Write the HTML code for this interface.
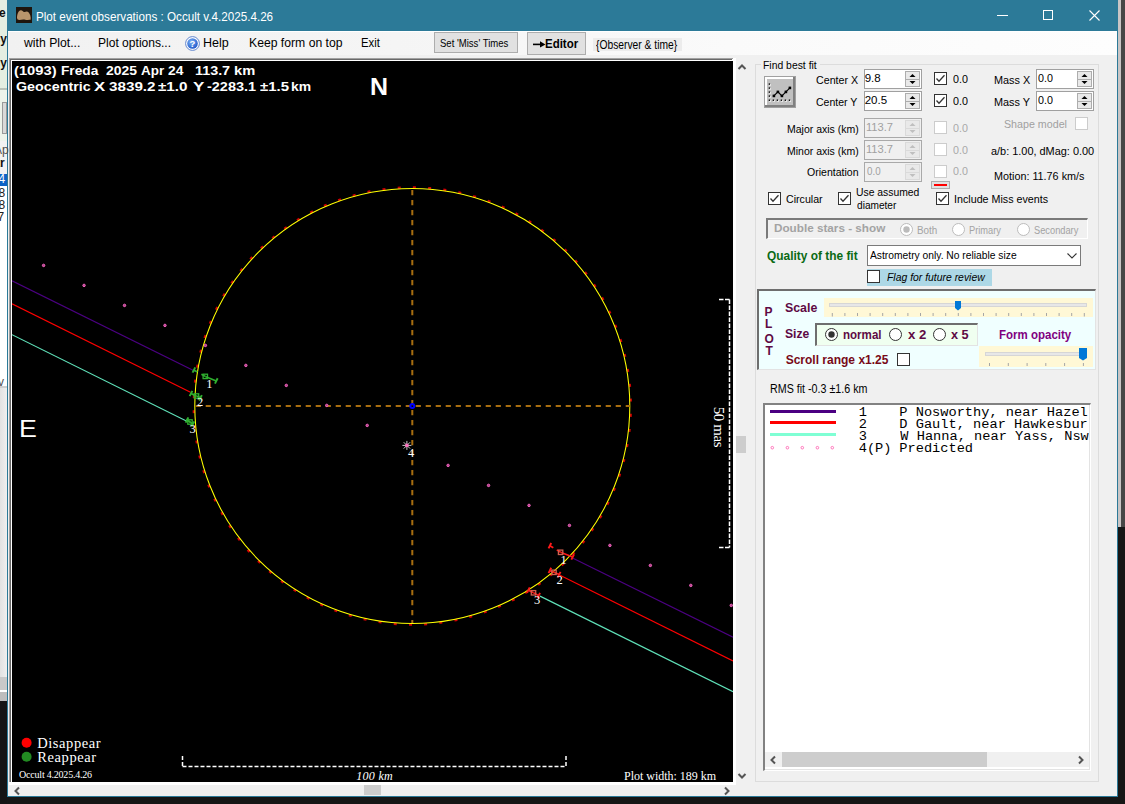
<!DOCTYPE html><html><head><meta charset="utf-8"><style>html,body{margin:0;padding:0;width:1125px;height:804px;overflow:hidden;background:#161616}body>div,body>svg{position:absolute}body{font-family:"Liberation Sans",sans-serif}</style></head><body><div style="left:0px;top:0px;width:1125px;height:804px;background:#161616"></div>
<div style="left:1118px;top:0px;width:3px;height:527px;background:#c9c5c5"></div>
<div style="left:1121px;top:0px;width:4px;height:527px;background:#474747"></div>
<div style="left:0px;top:0px;width:7px;height:88px;background:#e4eee2"></div>
<div style="left:0px;top:88px;width:7px;height:2px;background:#b9c2b9"></div>
<div style="left:0px;top:90px;width:7px;height:51px;background:#edf3eb"></div>
<div style="left:2px;top:102px;width:5px;height:32px;background:#d9d9d9;border:1px solid #9a9a9a;box-sizing:border-box"></div>
<div style="left:0px;top:141px;width:7px;height:33px;background:#f2f2f2"></div>
<div style="left:0px;top:174px;width:7px;height:12px;background:#0b63c6"></div>
<div style="left:0px;top:186px;width:7px;height:200px;background:#ffffff"></div>
<div style="left:0px;top:386px;width:7px;height:2px;background:#cfcfcf"></div>
<div style="left:0px;top:388px;width:7px;height:289px;background:linear-gradient(90deg,#e2e2e2,#efefef)"></div>
<div style="left:0px;top:677px;width:7px;height:13px;background:#c9c9c9"></div>
<div style="left:0px;top:690px;width:7px;height:2px;background:#ffffff"></div>
<div style="left:0px;top:692px;width:7px;height:9px;background:#bdbdbd"></div>
<div style="left:0px;top:701px;width:7px;height:103px;background:#151515"></div>
<div style="left:7px;top:0px;width:1111px;height:797px;background:#2c7a98"></div>
<div style="left:8px;top:31px;width:1109px;height:765px;background:#f0f0f0"></div>
<div style="left:8px;top:31px;width:1109px;height:24px;background:linear-gradient(90deg,#f1f1f1 0%,#f5f5f5 35%,#fafafa 65%,#fdfdfd 100%)"></div>
<div style="left:8px;top:31px;width:1109px;height:1px;background:#ffffff"></div>
<svg style="left:16px;top:7px" width="16" height="16"><rect width="16" height="16" fill="#1e150d"/><path d="M1 11 C1 7.5 2.5 3.5 4.8 3.3 C6.5 3.2 7 5.3 8.5 5 C10 4.7 11 3.8 12.5 5.2 C14 6.8 15.2 10 14.6 12.8 C12.5 12.2 10.5 13.6 8.3 12.6 C6.2 12 4 13.6 1.6 12.6 Z" fill="#b8956c"/></svg>
<div style="left:997px;top:15px;width:11px;height:1px;background:#fff"></div>
<div style="left:1043px;top:10px;width:10px;height:10px;border:1px solid #fff;box-sizing:border-box"></div>
<svg style="left:1088px;top:9px" width="13" height="13"><path d="M1.5 1.5 L11.5 11.5 M11.5 1.5 L1.5 11.5" stroke="#fff" stroke-width="1.1"/></svg>
<svg style="left:185px;top:36px" width="15" height="15"><defs><radialGradient id="hg" cx="0.4" cy="0.35" r="0.7"><stop offset="0" stop-color="#7fb4f5"/><stop offset="1" stop-color="#1c56c9"/></radialGradient></defs><circle cx="7.5" cy="7.5" r="6.9" fill="#ffffff" stroke="#4f78c8" stroke-width="0.9"/><circle cx="7.5" cy="7.5" r="5.3" fill="url(#hg)"/><text x="7.5" y="11" text-anchor="middle" font-family="Liberation Sans" font-weight="bold" font-size="9.5" fill="#fff">?</text></svg>
<div style="left:434px;top:32px;width:84px;height:21px;background:#e1e1e1;border:1px solid #adadad;box-sizing:border-box"></div>
<div style="left:527px;top:32px;width:59px;height:23px;background:#e1e1e1;border:1px solid #adadad;box-sizing:border-box"></div>
<svg style="left:532px;top:40px" width="16" height="9"><path d="M1 4.4 L11 4.4" stroke="#000" stroke-width="1.6"/><path d="M8 1.2 L13.5 4.4 L8 7.6 Z" fill="#000"/></svg>
<div style="left:593px;top:38px;width:89px;height:13px;background:#ececec"></div>
<div style="left:9px;top:58px;width:727px;height:727px;background:#ffffff"></div>
<div style="left:9px;top:58px;width:724px;height:1px;background:#a0a0a0"></div>
<div style="left:9px;top:59px;width:723px;height:1px;background:#696969"></div>
<div style="left:9px;top:58px;width:1px;height:724px;background:#a0a0a0"></div>
<div style="left:10px;top:59px;width:1px;height:723px;background:#696969"></div>
<div style="left:12px;top:61px;width:721px;height:721px;background:#000"></div>
<svg style="left:12px;top:61px" width="721" height="721" viewBox="12 61 721 721"><line x1="12.00" y1="280.80" x2="196.00" y2="371.77" stroke="#4b0082" stroke-width="1.15" /><line x1="573.00" y1="558.16" x2="733.00" y2="637.26" stroke="#4b0082" stroke-width="1.15" /><line x1="12.00" y1="303.80" x2="190.50" y2="392.23" stroke="#ff0000" stroke-width="1.15" /><line x1="560.00" y1="575.28" x2="733.00" y2="660.98" stroke="#ff0000" stroke-width="1.15" /><line x1="12.00" y1="334.70" x2="186.40" y2="421.04" stroke="#5fe0b8" stroke-width="1.15" /><line x1="540.00" y1="596.11" x2="733.00" y2="691.66" stroke="#5fe0b8" stroke-width="1.15" /><circle cx="412.3" cy="406.0" r="218.60" fill="none" stroke="#d00000" stroke-width="2.2" stroke-dasharray="3 12.261" transform="rotate(-1.943 412.3 406.0)"/><circle cx="412.3" cy="406.0" r="217.5" fill="none" stroke="#ffff00" stroke-width="1.05"/><line x1="195.70" y1="406.00" x2="630.00" y2="406.00" stroke="#a86e10" stroke-width="2" stroke-dasharray="5.2 4.8" /><line x1="412.30" y1="190.00" x2="412.30" y2="623.00" stroke="#a86e10" stroke-width="2" stroke-dasharray="5.2 4.8" /><circle cx="412.3" cy="406.0" r="2.0" fill="none" stroke="#0000ff" stroke-width="2"/><circle cx="43.60" cy="265.40" r="1.25" fill="#b04888" stroke="#ff66c8" stroke-width="0.9"/><circle cx="84.05" cy="285.40" r="1.25" fill="#b04888" stroke="#ff66c8" stroke-width="0.9"/><circle cx="124.50" cy="305.40" r="1.25" fill="#b04888" stroke="#ff66c8" stroke-width="0.9"/><circle cx="164.95" cy="325.40" r="1.25" fill="#b04888" stroke="#ff66c8" stroke-width="0.9"/><circle cx="205.40" cy="345.40" r="1.25" fill="#b04888" stroke="#ff66c8" stroke-width="0.9"/><circle cx="245.85" cy="365.40" r="1.25" fill="#b04888" stroke="#ff66c8" stroke-width="0.9"/><circle cx="286.30" cy="385.40" r="1.25" fill="#b04888" stroke="#ff66c8" stroke-width="0.9"/><circle cx="326.75" cy="405.40" r="1.25" fill="#b04888" stroke="#ff66c8" stroke-width="0.9"/><circle cx="367.20" cy="425.40" r="1.25" fill="#b04888" stroke="#ff66c8" stroke-width="0.9"/><circle cx="448.10" cy="465.40" r="1.25" fill="#b04888" stroke="#ff66c8" stroke-width="0.9"/><circle cx="488.55" cy="485.40" r="1.25" fill="#b04888" stroke="#ff66c8" stroke-width="0.9"/><circle cx="529.00" cy="505.40" r="1.25" fill="#b04888" stroke="#ff66c8" stroke-width="0.9"/><circle cx="569.45" cy="525.40" r="1.25" fill="#b04888" stroke="#ff66c8" stroke-width="0.9"/><circle cx="609.90" cy="545.40" r="1.25" fill="#b04888" stroke="#ff66c8" stroke-width="0.9"/><circle cx="650.35" cy="565.40" r="1.25" fill="#b04888" stroke="#ff66c8" stroke-width="0.9"/><circle cx="690.80" cy="585.40" r="1.25" fill="#b04888" stroke="#ff66c8" stroke-width="0.9"/><circle cx="731.25" cy="605.40" r="1.25" fill="#b04888" stroke="#ff66c8" stroke-width="0.9"/><line x1="402.40" y1="445.40" x2="411.40" y2="445.40" stroke="#c8c8c8" stroke-width="1" /><line x1="403.72" y1="442.22" x2="410.08" y2="448.58" stroke="#c8c8c8" stroke-width="1" /><line x1="406.90" y1="440.90" x2="406.90" y2="449.90" stroke="#c8c8c8" stroke-width="1" /><line x1="410.08" y1="442.22" x2="403.72" y2="448.58" stroke="#c8c8c8" stroke-width="1" /><circle cx="406.9" cy="445.4" r="1.8" fill="#ff70c0"/><line x1="192.57" y1="372.69" x2="195.23" y2="367.31" stroke="#2fb02f" stroke-width="1.9" /><line x1="214.97" y1="383.59" x2="217.63" y2="378.21" stroke="#2fb02f" stroke-width="1.9" /><line x1="193.90" y1="370.00" x2="197.39" y2="371.96" stroke="#2fb02f" stroke-width="1.6" /><line x1="201.38" y1="374.20" x2="205.30" y2="376.40" stroke="#2fb02f" stroke-width="1.6" /><line x1="205.30" y1="376.40" x2="216.30" y2="380.90" stroke="#2fb02f" stroke-width="1.6" /><rect x="203.1" y="374.2" width="4.4" height="4.4" fill="none" stroke="#2fb02f" stroke-width="1.3"/><line x1="189.67" y1="396.19" x2="192.33" y2="390.81" stroke="#2fb02f" stroke-width="1.9" /><line x1="199.17" y1="400.49" x2="201.83" y2="395.11" stroke="#2fb02f" stroke-width="1.9" /><line x1="191.00" y1="393.50" x2="194.64" y2="395.16" stroke="#2fb02f" stroke-width="1.6" /><line x1="192.40" y1="394.14" x2="196.50" y2="396.00" stroke="#2fb02f" stroke-width="1.6" /><line x1="196.50" y1="396.00" x2="200.50" y2="397.80" stroke="#2fb02f" stroke-width="1.6" /><rect x="194.3" y="393.8" width="4.4" height="4.4" fill="none" stroke="#2fb02f" stroke-width="1.3"/><line x1="185.67" y1="422.69" x2="188.33" y2="417.31" stroke="#2fb02f" stroke-width="1.9" /><line x1="191.67" y1="426.69" x2="194.33" y2="421.31" stroke="#2fb02f" stroke-width="1.9" /><line x1="187.00" y1="420.00" x2="190.33" y2="422.22" stroke="#2fb02f" stroke-width="1.6" /><line x1="186.26" y1="419.50" x2="190.00" y2="422.00" stroke="#2fb02f" stroke-width="1.6" /><line x1="190.00" y1="422.00" x2="193.00" y2="424.00" stroke="#2fb02f" stroke-width="1.6" /><rect x="187.8" y="419.8" width="4.4" height="4.4" fill="none" stroke="#2fb02f" stroke-width="1.3"/><line x1="548.57" y1="548.39" x2="551.23" y2="543.01" stroke="#ff1a1a" stroke-width="1.9" /><line x1="571.37" y1="559.59" x2="574.03" y2="554.21" stroke="#ff1a1a" stroke-width="1.9" /><line x1="549.90" y1="545.70" x2="553.30" y2="547.80" stroke="#ff1a1a" stroke-width="1.6" /><line x1="556.77" y1="549.94" x2="560.60" y2="552.30" stroke="#ff1a1a" stroke-width="1.6" /><line x1="560.60" y1="552.30" x2="572.70" y2="556.90" stroke="#ff1a1a" stroke-width="1.6" /><rect x="558.4" y="550.1" width="4.4" height="4.4" fill="none" stroke="#d06050" stroke-width="1.3"/><line x1="548.57" y1="573.09" x2="551.23" y2="567.71" stroke="#ff1a1a" stroke-width="1.9" /><line x1="557.87" y1="577.29" x2="560.53" y2="571.91" stroke="#ff1a1a" stroke-width="1.9" /><line x1="549.90" y1="570.40" x2="553.53" y2="572.08" stroke="#ff1a1a" stroke-width="1.6" /><line x1="549.92" y1="570.41" x2="554.00" y2="572.30" stroke="#ff1a1a" stroke-width="1.6" /><line x1="554.00" y1="572.30" x2="559.20" y2="574.60" stroke="#ff1a1a" stroke-width="1.6" /><rect x="551.8" y="570.1" width="4.4" height="4.4" fill="none" stroke="#d06050" stroke-width="1.3"/><line x1="527.07" y1="592.69" x2="529.73" y2="587.31" stroke="#ff1a1a" stroke-width="1.9" /><line x1="537.37" y1="598.29" x2="540.03" y2="592.91" stroke="#ff1a1a" stroke-width="1.9" /><line x1="528.40" y1="590.00" x2="531.91" y2="591.93" stroke="#ff1a1a" stroke-width="1.6" /><line x1="529.56" y1="590.63" x2="533.50" y2="592.80" stroke="#ff1a1a" stroke-width="1.6" /><line x1="533.50" y1="592.80" x2="538.70" y2="595.60" stroke="#ff1a1a" stroke-width="1.6" /><rect x="531.3" y="590.6" width="4.4" height="4.4" fill="none" stroke="#d06050" stroke-width="1.3"/><line x1="719.00" y1="299.50" x2="729.50" y2="299.50" stroke="#fff" stroke-width="1.5" stroke-dasharray="4.5 1.5" /><line x1="729.50" y1="299.50" x2="729.50" y2="547.50" stroke="#fff" stroke-width="1.5" stroke-dasharray="4.5 1.5" /><line x1="719.00" y1="547.50" x2="729.50" y2="547.50" stroke="#fff" stroke-width="1.5" stroke-dasharray="4.5 1.5" /><line x1="182.50" y1="766.50" x2="566.00" y2="766.50" stroke="#fff" stroke-width="1.5" stroke-dasharray="4 2" /><line x1="182.50" y1="756.00" x2="182.50" y2="766.50" stroke="#fff" stroke-width="1.5" stroke-dasharray="4 2" /><line x1="566.00" y1="756.00" x2="566.00" y2="766.50" stroke="#fff" stroke-width="1.5" stroke-dasharray="4 2" /><circle cx="26.6" cy="742.7" r="5" fill="#ff0000"/><circle cx="26.6" cy="756.7" r="5" fill="#228b22"/></svg>
<div style="left:688.6px;top:419.0px;width:60px;height:16px;transform:rotate(90deg);transform-origin:30px 8px;font:15px/16px 'Liberation Serif',serif;letter-spacing:-0.4px;color:#fff;text-align:center;white-space:pre">50 mas</div>
<svg style="left:737px;top:62px" width="10" height="10"><path d="M1.5 7 L5 3.5 L8.5 7" fill="none" stroke="#555555" stroke-width="2"/></svg>
<svg style="left:737px;top:771px" width="10" height="10"><path d="M1.5 3 L5 6.5 L8.5 3" fill="none" stroke="#555555" stroke-width="2"/></svg>
<div style="left:736px;top:436px;width:10px;height:17px;background:#cdcdcd"></div>
<svg style="left:12px;top:786px" width="10" height="10"><path d="M7 1.5 L3.5 5 L7 8.5" fill="none" stroke="#555555" stroke-width="2"/></svg>
<svg style="left:722px;top:786px" width="10" height="10"><path d="M3 1.5 L6.5 5 L3 8.5" fill="none" stroke="#555555" stroke-width="2"/></svg>
<div style="left:364px;top:785px;width:17px;height:10px;background:#cdcdcd"></div>
<div style="left:755px;top:64px;width:344px;height:718px;border:1px solid #dcdcdc;box-sizing:border-box"></div>
<div style="left:761px;top:60px;width:59px;height:8px;background:#f0f0f0"></div>
<div style="left:764px;top:76px;width:32px;height:32px;background:#a0a0a0"></div>
<div style="left:765px;top:77px;width:30px;height:30px;background:#808080"></div>
<div style="left:765px;top:77px;width:28px;height:28px;background:#ffffff"></div>
<div style="left:767px;top:79px;width:26px;height:26px;background:#c0c0c0"></div>
<svg style="left:764px;top:76px" width="32" height="32"><rect x="5.3" y="8.0" width="1.6" height="1.6" fill="#fff"/><rect x="4.7" y="7.4" width="1.4" height="1.4" fill="#000"/><rect x="5.3" y="12.0" width="1.6" height="1.6" fill="#fff"/><rect x="4.7" y="11.4" width="1.4" height="1.4" fill="#000"/><rect x="5.3" y="16.0" width="1.6" height="1.6" fill="#fff"/><rect x="4.7" y="15.4" width="1.4" height="1.4" fill="#000"/><rect x="5.3" y="20.0" width="1.6" height="1.6" fill="#fff"/><rect x="4.7" y="19.4" width="1.4" height="1.4" fill="#000"/><rect x="5.3" y="24.1" width="1.6" height="1.6" fill="#fff"/><rect x="4.7" y="23.5" width="1.4" height="1.4" fill="#000"/><rect x="9.3" y="24.1" width="1.6" height="1.6" fill="#fff"/><rect x="8.7" y="23.5" width="1.4" height="1.4" fill="#000"/><rect x="13.3" y="24.1" width="1.6" height="1.6" fill="#fff"/><rect x="12.7" y="23.5" width="1.4" height="1.4" fill="#000"/><rect x="17.3" y="24.1" width="1.6" height="1.6" fill="#fff"/><rect x="16.7" y="23.5" width="1.4" height="1.4" fill="#000"/><rect x="21.3" y="24.1" width="1.6" height="1.6" fill="#fff"/><rect x="20.7" y="23.5" width="1.4" height="1.4" fill="#000"/><rect x="25.4" y="24.1" width="1.6" height="1.6" fill="#fff"/><rect x="24.8" y="23.5" width="1.4" height="1.4" fill="#000"/><polyline points="9.9,19.9 13.9,15.9 17.9,19.9 21.9,15.9 25.9,11.9" fill="none" stroke="#000" stroke-width="1.1"/><rect x="8.6" y="18.599999999999998" width="2.6" height="2.6" fill="#000"/><rect x="12.6" y="14.6" width="2.6" height="2.6" fill="#000"/><rect x="16.599999999999998" y="18.599999999999998" width="2.6" height="2.6" fill="#000"/><rect x="20.599999999999998" y="14.6" width="2.6" height="2.6" fill="#000"/><rect x="24.599999999999998" y="10.6" width="2.6" height="2.6" fill="#000"/></svg>
<div style="left:864px;top:69px;width:58px;height:20px;border:1px solid #a0a0a0;background:#ffffff;box-sizing:border-box"></div>
<div style="left:905px;top:71px;width:15px;height:16px;background:#e9e9e9;border:1px solid #adadad;box-sizing:border-box"></div>
<div style="left:906px;top:79px;width:13px;height:1px;background:#adadad"></div>
<svg style="left:905px;top:71px" width="15" height="16"><path d="M4.5 6 L7.5 3 L10.5 6 Z" fill="#000"/><path d="M4.5 10 L7.5 13 L10.5 10 Z" fill="#000"/></svg>
<div style="left:864px;top:91px;width:58px;height:20px;border:1px solid #a0a0a0;background:#ffffff;box-sizing:border-box"></div>
<div style="left:905px;top:93px;width:15px;height:16px;background:#e9e9e9;border:1px solid #adadad;box-sizing:border-box"></div>
<div style="left:906px;top:101px;width:13px;height:1px;background:#adadad"></div>
<svg style="left:905px;top:93px" width="15" height="16"><path d="M4.5 6 L7.5 3 L10.5 6 Z" fill="#000"/><path d="M4.5 10 L7.5 13 L10.5 10 Z" fill="#000"/></svg>
<div style="left:934px;top:72px;width:13px;height:13px;border:1px solid #333333;background:#fff;box-sizing:border-box"></div>
<svg style="left:934px;top:72px" width="13" height="13"><path d="M2.5 6.5 L5 9.2 L10.5 3.2" fill="none" stroke="#333" stroke-width="1.3"/></svg>
<div style="left:934px;top:94px;width:13px;height:13px;border:1px solid #333333;background:#fff;box-sizing:border-box"></div>
<svg style="left:934px;top:94px" width="13" height="13"><path d="M2.5 6.5 L5 9.2 L10.5 3.2" fill="none" stroke="#333" stroke-width="1.3"/></svg>
<div style="left:1036px;top:69px;width:58px;height:20px;border:1px solid #a0a0a0;background:#ffffff;box-sizing:border-box"></div>
<div style="left:1077px;top:71px;width:15px;height:16px;background:#e9e9e9;border:1px solid #adadad;box-sizing:border-box"></div>
<div style="left:1078px;top:79px;width:13px;height:1px;background:#adadad"></div>
<svg style="left:1077px;top:71px" width="15" height="16"><path d="M4.5 6 L7.5 3 L10.5 6 Z" fill="#000"/><path d="M4.5 10 L7.5 13 L10.5 10 Z" fill="#000"/></svg>
<div style="left:1036px;top:91px;width:58px;height:20px;border:1px solid #a0a0a0;background:#ffffff;box-sizing:border-box"></div>
<div style="left:1077px;top:93px;width:15px;height:16px;background:#e9e9e9;border:1px solid #adadad;box-sizing:border-box"></div>
<div style="left:1078px;top:101px;width:13px;height:1px;background:#adadad"></div>
<svg style="left:1077px;top:93px" width="15" height="16"><path d="M4.5 6 L7.5 3 L10.5 6 Z" fill="#000"/><path d="M4.5 10 L7.5 13 L10.5 10 Z" fill="#000"/></svg>
<div style="left:864px;top:118px;width:58px;height:20px;border:1px solid #a9a9a9;background:#f0f0f0;box-sizing:border-box"></div>
<div style="left:905px;top:120px;width:15px;height:16px;background:#e9e9e9;border:1px solid #dadada;box-sizing:border-box"></div>
<div style="left:906px;top:128px;width:13px;height:1px;background:#dadada"></div>
<svg style="left:905px;top:120px" width="15" height="16"><path d="M4.5 6 L7.5 3 L10.5 6 Z" fill="#bfbfbf"/><path d="M4.5 10 L7.5 13 L10.5 10 Z" fill="#bfbfbf"/></svg>
<div style="left:864px;top:140px;width:58px;height:20px;border:1px solid #a9a9a9;background:#f0f0f0;box-sizing:border-box"></div>
<div style="left:905px;top:142px;width:15px;height:16px;background:#e9e9e9;border:1px solid #dadada;box-sizing:border-box"></div>
<div style="left:906px;top:150px;width:13px;height:1px;background:#dadada"></div>
<svg style="left:905px;top:142px" width="15" height="16"><path d="M4.5 6 L7.5 3 L10.5 6 Z" fill="#bfbfbf"/><path d="M4.5 10 L7.5 13 L10.5 10 Z" fill="#bfbfbf"/></svg>
<div style="left:864px;top:162px;width:58px;height:20px;border:1px solid #a9a9a9;background:#f0f0f0;box-sizing:border-box"></div>
<div style="left:905px;top:164px;width:15px;height:16px;background:#e9e9e9;border:1px solid #dadada;box-sizing:border-box"></div>
<div style="left:906px;top:172px;width:13px;height:1px;background:#dadada"></div>
<svg style="left:905px;top:164px" width="15" height="16"><path d="M4.5 6 L7.5 3 L10.5 6 Z" fill="#bfbfbf"/><path d="M4.5 10 L7.5 13 L10.5 10 Z" fill="#bfbfbf"/></svg>
<div style="left:934px;top:121px;width:13px;height:13px;border:1px solid #cccccc;background:#fff;box-sizing:border-box"></div>
<div style="left:934px;top:143px;width:13px;height:13px;border:1px solid #cccccc;background:#fff;box-sizing:border-box"></div>
<div style="left:934px;top:165px;width:13px;height:13px;border:1px solid #cccccc;background:#fff;box-sizing:border-box"></div>
<div style="left:931px;top:181px;width:19px;height:8px;background:#e1e1e1;border:1px solid #adadad;box-sizing:border-box"></div>
<div style="left:934px;top:184px;width:13px;height:2px;background:#ff0000"></div>
<div style="left:1075px;top:117px;width:13px;height:13px;border:1px solid #cccccc;background:#fff;box-sizing:border-box"></div>
<div style="left:768px;top:192px;width:13px;height:13px;border:1px solid #333333;background:#fff;box-sizing:border-box"></div>
<svg style="left:768px;top:192px" width="13" height="13"><path d="M2.5 6.5 L5 9.2 L10.5 3.2" fill="none" stroke="#333" stroke-width="1.3"/></svg>
<div style="left:838px;top:192px;width:13px;height:13px;border:1px solid #333333;background:#fff;box-sizing:border-box"></div>
<svg style="left:838px;top:192px" width="13" height="13"><path d="M2.5 6.5 L5 9.2 L10.5 3.2" fill="none" stroke="#333" stroke-width="1.3"/></svg>
<div style="left:936px;top:192px;width:13px;height:13px;border:1px solid #333333;background:#fff;box-sizing:border-box"></div>
<svg style="left:936px;top:192px" width="13" height="13"><path d="M2.5 6.5 L5 9.2 L10.5 3.2" fill="none" stroke="#333" stroke-width="1.3"/></svg>
<div style="left:766px;top:218px;width:322px;height:21px;background:#f0f0f0;border-top:2px solid #7a7a7a;border-left:2px solid #7a7a7a;border-right:1px solid #ffffff;border-bottom:1px solid #ffffff;box-sizing:border-box"></div>
<svg style="left:900px;top:223px" width="13" height="13"><circle cx="6.5" cy="6.5" r="6" fill="#fff" stroke="#bcbcbc" stroke-width="1"/><circle cx="6.5" cy="6.5" r="3.2" fill="#bcbcbc"/></svg>
<svg style="left:952px;top:223px" width="13" height="13"><circle cx="6.5" cy="6.5" r="6" fill="#fff" stroke="#bcbcbc" stroke-width="1"/></svg>
<svg style="left:1017px;top:223px" width="13" height="13"><circle cx="6.5" cy="6.5" r="6" fill="#fff" stroke="#bcbcbc" stroke-width="1"/></svg>
<div style="left:867px;top:245px;width:214px;height:21px;background:#fff;border:1px solid #7a7a7a;box-sizing:border-box"></div>
<svg style="left:1066px;top:251px" width="12" height="10"><path d="M1.5 2.5 L6 7 L10.5 2.5" fill="none" stroke="#333" stroke-width="1.1"/></svg>
<div style="left:867px;top:269px;width:125px;height:17px;background:#add8e6"></div>
<div style="left:867px;top:270px;width:13px;height:13px;border:1px solid #333333;background:#fff;box-sizing:border-box"></div>
<div style="left:757px;top:289px;width:339px;height:81px;background:#f0ffff;border-top:2px solid #6e6e6e;border-left:2px solid #6e6e6e;border-right:1px solid #e3e3e3;border-bottom:1px solid #e3e3e3;box-sizing:border-box"></div>
<div style="left:824px;top:298px;width:269px;height:19px;background:#fff8d6"></div>
<div style="left:829px;top:303px;width:258px;height:4px;background:#e7e7e7;border:1px solid #d6d6d6;box-sizing:border-box"></div>
<svg style="left:824px;top:298px" width="269" height="19"><line x1="8.3" y1="15" x2="8.3" y2="18.5" stroke="#a6a6a6" stroke-width="1"/><line x1="20.9" y1="15" x2="20.9" y2="18" stroke="#a6a6a6" stroke-width="1"/><line x1="33.5" y1="15" x2="33.5" y2="18" stroke="#a6a6a6" stroke-width="1"/><line x1="46.1" y1="15" x2="46.1" y2="18" stroke="#a6a6a6" stroke-width="1"/><line x1="58.7" y1="15" x2="58.7" y2="18" stroke="#a6a6a6" stroke-width="1"/><line x1="71.3" y1="15" x2="71.3" y2="18" stroke="#a6a6a6" stroke-width="1"/><line x1="83.9" y1="15" x2="83.9" y2="18" stroke="#a6a6a6" stroke-width="1"/><line x1="96.5" y1="15" x2="96.5" y2="18" stroke="#a6a6a6" stroke-width="1"/><line x1="109.1" y1="15" x2="109.1" y2="18" stroke="#a6a6a6" stroke-width="1"/><line x1="121.7" y1="15" x2="121.7" y2="18" stroke="#a6a6a6" stroke-width="1"/><line x1="134.3" y1="15" x2="134.3" y2="18" stroke="#a6a6a6" stroke-width="1"/><line x1="146.9" y1="15" x2="146.9" y2="18" stroke="#a6a6a6" stroke-width="1"/><line x1="159.5" y1="15" x2="159.5" y2="18" stroke="#a6a6a6" stroke-width="1"/><line x1="172.1" y1="15" x2="172.1" y2="18" stroke="#a6a6a6" stroke-width="1"/><line x1="184.7" y1="15" x2="184.7" y2="18" stroke="#a6a6a6" stroke-width="1"/><line x1="197.3" y1="15" x2="197.3" y2="18" stroke="#a6a6a6" stroke-width="1"/><line x1="209.9" y1="15" x2="209.9" y2="18" stroke="#a6a6a6" stroke-width="1"/><line x1="222.5" y1="15" x2="222.5" y2="18" stroke="#a6a6a6" stroke-width="1"/><line x1="235.1" y1="15" x2="235.1" y2="18" stroke="#a6a6a6" stroke-width="1"/><line x1="247.7" y1="15" x2="247.7" y2="18" stroke="#a6a6a6" stroke-width="1"/><line x1="260.3" y1="15" x2="260.3" y2="18.5" stroke="#a6a6a6" stroke-width="1"/><path d="M131 3 L137 3 L137 10 L134 12.5 L131 10 Z" fill="#0078d7"/></svg>
<div style="left:815px;top:323px;width:163px;height:23px;background:#f0fff0;border-top:2px solid #6e6e6e;border-left:2px solid #6e6e6e;border-right:1px solid #e3e3e3;border-bottom:1px solid #e3e3e3;box-sizing:border-box"></div>
<svg style="left:825px;top:328px" width="13" height="13"><circle cx="6.5" cy="6.5" r="6" fill="#fff" stroke="#333333" stroke-width="1"/><circle cx="6.5" cy="6.5" r="3.2" fill="#333"/></svg>
<svg style="left:889px;top:328px" width="13" height="13"><circle cx="6.5" cy="6.5" r="6" fill="#fff" stroke="#333333" stroke-width="1"/></svg>
<svg style="left:933px;top:328px" width="13" height="13"><circle cx="6.5" cy="6.5" r="6" fill="#fff" stroke="#333333" stroke-width="1"/></svg>
<div style="left:897px;top:353px;width:13px;height:13px;border:1px solid #333333;background:#fff;box-sizing:border-box"></div>
<div style="left:979px;top:346px;width:114px;height:21px;background:#fff8d6"></div>
<div style="left:985px;top:352px;width:102px;height:4px;background:#e7e7e7;border:1px solid #d6d6d6;box-sizing:border-box"></div>
<svg style="left:979px;top:346px" width="114" height="21"><line x1="10.5" y1="17" x2="10.5" y2="20" stroke="#a6a6a6" stroke-width="1"/><line x1="29.3" y1="17" x2="29.3" y2="20" stroke="#a6a6a6" stroke-width="1"/><line x1="48.1" y1="17" x2="48.1" y2="20" stroke="#a6a6a6" stroke-width="1"/><line x1="66.8" y1="17" x2="66.8" y2="20" stroke="#a6a6a6" stroke-width="1"/><line x1="85.6" y1="17" x2="85.6" y2="20" stroke="#a6a6a6" stroke-width="1"/><line x1="104.4" y1="17" x2="104.4" y2="20" stroke="#a6a6a6" stroke-width="1"/><path d="M100 2 L108 2 L108 12 L104 14.5 L100 12 Z" fill="#0078d7"/></svg>
<div style="left:763px;top:403px;width:328px;height:368px;background:#fff;border-top:2px solid #828282;border-left:2px solid #828282;border-right:1px solid #ffffff;border-bottom:1px solid #ffffff;box-sizing:border-box"></div>
<div style="left:765px;top:405px;width:325px;height:365px;border-right:1px solid #e3e3e3;border-bottom:1px solid #e3e3e3;box-sizing:border-box"></div>
<div style="left:770px;top:410px;width:66px;height:3px;background:#4b0082"></div>
<div style="left:770px;top:421px;width:66px;height:3px;background:#ff0000"></div>
<div style="left:770px;top:433px;width:66px;height:3px;background:#7fffd4"></div>
<svg style="left:765px;top:440px" width="80" height="16"><circle cx="7.3" cy="7.7" r="1.3" fill="none" stroke="#ff69b4" stroke-width="0.9"/><circle cx="22.4" cy="7.7" r="1.3" fill="none" stroke="#ff69b4" stroke-width="0.9"/><circle cx="37.3" cy="7.7" r="1.3" fill="none" stroke="#ff69b4" stroke-width="0.9"/><circle cx="52.4" cy="7.7" r="1.3" fill="none" stroke="#ff69b4" stroke-width="0.9"/><circle cx="67.3" cy="7.7" r="1.3" fill="none" stroke="#ff69b4" stroke-width="0.9"/></svg>
<div style="left:765px;top:752px;width:324px;height:15px;background:#f0f0f0"></div>
<svg style="left:767px;top:754px" width="12" height="12"><path d="M8 2.5 L4.5 6 L8 9.5" fill="none" stroke="#555555" stroke-width="2"/></svg>
<svg style="left:1075px;top:754px" width="12" height="12"><path d="M4 2.5 L7.5 6 L4 9.5" fill="none" stroke="#555555" stroke-width="2"/></svg>
<div style="left:782px;top:752px;width:205px;height:15px;background:#cdcdcd"></div>
<div style="left:-1.00px;top:7.40px;font:normal bold 12px 'Liberation Sans', sans-serif;line-height:1;color:#101010;white-space:pre">e</div><div style="left:-6.50px;top:32.50px;font:normal bold 12px 'Liberation Sans', sans-serif;line-height:1;color:#101010;white-space:pre">cy</div><div style="left:-6.50px;top:56.50px;font:normal bold 12px 'Liberation Sans', sans-serif;line-height:1;color:#101010;white-space:pre">cy</div><div style="left:-6.00px;top:144.00px;font:normal normal 12px 'Liberation Sans', sans-serif;line-height:1;color:#505050;white-space:pre">Ap</div><div style="left:-4.00px;top:157.00px;font:normal bold 12px 'Liberation Sans', sans-serif;line-height:1;color:#101010;white-space:pre">tr</div><div style="left:-1.50px;top:173.00px;font:normal normal 12px 'Liberation Sans', sans-serif;line-height:1;color:#ffffff;white-space:pre">4</div><div style="left:-1.50px;top:187.00px;font:normal normal 12px 'Liberation Sans', sans-serif;line-height:1;color:#202020;white-space:pre">8</div><div style="left:-1.50px;top:199.00px;font:normal normal 12px 'Liberation Sans', sans-serif;line-height:1;color:#202020;white-space:pre">8</div><div style="left:-2.50px;top:211.00px;font:normal normal 12px 'Liberation Sans', sans-serif;line-height:1;color:#202020;white-space:pre">7</div><div style="left:-2.00px;top:376.00px;font:normal normal 12px 'Liberation Sans', sans-serif;line-height:1;color:#505050;white-space:pre">v</div><div style="left:36.40px;top:9.80px;font:normal normal 13px 'Liberation Sans', sans-serif;line-height:1;color:#ffffff;white-space:pre;transform:scaleX(0.8973);transform-origin:0 0">Plot event observations : Occult v.4.2025.4.26</div><div style="left:23.50px;top:36.00px;font:normal normal 13px 'Liberation Sans', sans-serif;line-height:1;color:#000;white-space:pre;transform:scaleX(0.9407);transform-origin:0 0">with Plot...</div><div style="left:97.67px;top:36.00px;font:normal normal 13px 'Liberation Sans', sans-serif;line-height:1;color:#000;white-space:pre;transform:scaleX(0.9273);transform-origin:0 0">Plot options...</div><div style="left:203.44px;top:36.00px;font:normal normal 13px 'Liberation Sans', sans-serif;line-height:1;color:#000;white-space:pre;transform:scaleX(0.9640);transform-origin:0 0">Help</div><div style="left:249.46px;top:36.00px;font:normal normal 13px 'Liberation Sans', sans-serif;line-height:1;color:#000;white-space:pre;transform:scaleX(0.9378);transform-origin:0 0">Keep form on top</div><div style="left:361.33px;top:36.00px;font:normal normal 13px 'Liberation Sans', sans-serif;line-height:1;color:#000;white-space:pre;transform:scaleX(0.8667);transform-origin:0 0">Exit</div><div style="left:440.29px;top:37.70px;font:normal normal 10.5px 'Liberation Sans', sans-serif;line-height:1;color:#000;white-space:pre;transform:scaleX(0.9081);transform-origin:0 0">Set &#x27;Miss&#x27; Times</div><div style="left:545.12px;top:36.70px;font:normal bold 13px 'Liberation Sans', sans-serif;line-height:1;color:#000;white-space:pre;transform:scaleX(0.8838);transform-origin:0 0">Editor</div><div style="left:596.20px;top:39.20px;font:normal normal 12px 'Liberation Sans', sans-serif;line-height:1;color:#000;white-space:pre;transform:scaleX(0.8568);transform-origin:0 0">{Observer &amp; time}</div><div style="left:14.47px;top:63.50px;font:normal bold 13px 'Liberation Sans', sans-serif;line-height:1;color:#fff;white-space:pre;transform:scaleX(1.1333);transform-origin:0 0">(1093)</div><div style="left:60.75px;top:63.50px;font:normal bold 13px 'Liberation Sans', sans-serif;line-height:1;color:#fff;white-space:pre;transform:scaleX(1.0543);transform-origin:0 0">Freda</div><div style="left:106.30px;top:63.50px;font:normal bold 13px 'Liberation Sans', sans-serif;line-height:1;color:#fff;white-space:pre;transform:scaleX(1.0724);transform-origin:0 0">2025</div><div style="left:141.00px;top:63.50px;font:normal bold 13px 'Liberation Sans', sans-serif;line-height:1;color:#fff;white-space:pre;transform:scaleX(1.0318);transform-origin:0 0">Apr</div><div style="left:167.70px;top:63.50px;font:normal bold 13px 'Liberation Sans', sans-serif;line-height:1;color:#fff;white-space:pre;transform:scaleX(1.0667);transform-origin:0 0">24</div><div style="left:194.60px;top:63.50px;font:normal bold 13px 'Liberation Sans', sans-serif;line-height:1;color:#fff;white-space:pre;transform:scaleX(1.1033);transform-origin:0 0">113.7</div><div style="left:234.07px;top:63.50px;font:normal bold 13px 'Liberation Sans', sans-serif;line-height:1;color:#fff;white-space:pre;transform:scaleX(1.1294);transform-origin:0 0">km</div><div style="left:15.60px;top:79.50px;font:normal bold 13px 'Liberation Sans', sans-serif;line-height:1;color:#fff;white-space:pre;transform:scaleX(1.1000);transform-origin:0 0">Geocentric</div><div style="left:93.50px;top:79.50px;font:normal bold 13px 'Liberation Sans', sans-serif;line-height:1;color:#fff;white-space:pre;transform:scaleX(1.2875);transform-origin:0 0">X</div><div style="left:109.13px;top:79.50px;font:normal bold 13px 'Liberation Sans', sans-serif;line-height:1;color:#fff;white-space:pre;transform:scaleX(1.1711);transform-origin:0 0">3839.2</div><div style="left:157.90px;top:79.50px;font:normal bold 13px 'Liberation Sans', sans-serif;line-height:1;color:#fff;white-space:pre;transform:scaleX(1.1720);transform-origin:0 0">±1.0</div><div style="left:193.30px;top:79.50px;font:normal bold 13px 'Liberation Sans', sans-serif;line-height:1;color:#fff;white-space:pre;transform:scaleX(1.3125);transform-origin:0 0">Y</div><div style="left:207.00px;top:79.50px;font:normal bold 13px 'Liberation Sans', sans-serif;line-height:1;color:#fff;white-space:pre;transform:scaleX(1.1136);transform-origin:0 0">-2283.1</div><div style="left:259.70px;top:79.50px;font:normal bold 13px 'Liberation Sans', sans-serif;line-height:1;color:#fff;white-space:pre;transform:scaleX(1.1520);transform-origin:0 0">±1.5</div><div style="left:290.63px;top:79.50px;font:normal bold 13px 'Liberation Sans', sans-serif;line-height:1;color:#fff;white-space:pre;transform:scaleX(1.0706);transform-origin:0 0">km</div><div style="left:369.61px;top:75.90px;font:normal bold 23px 'Liberation Sans', sans-serif;line-height:1;color:#fff;white-space:pre;transform:scaleX(1.0857);transform-origin:0 0">N</div><div style="left:19.17px;top:416.90px;font:normal normal 24px 'Liberation Sans', sans-serif;line-height:1;color:#fff;white-space:pre;transform:scaleX(1.1154);transform-origin:0 0">E</div><div style="left:37.20px;top:735.60px;font:normal normal 14.5px 'Liberation Serif', serif;line-height:1;color:#fff;white-space:pre;letter-spacing:0.588px">Disappear</div><div style="left:37.20px;top:749.60px;font:normal normal 14.5px 'Liberation Serif', serif;line-height:1;color:#fff;white-space:pre;letter-spacing:0.600px">Reappear</div><div style="left:19.10px;top:769.60px;font:normal normal 10px 'Liberation Serif', serif;line-height:1;color:#fff;white-space:pre;letter-spacing:-0.218px">Occult 4.2025.4.26</div><div style="left:356.20px;top:770.00px;font:italic normal 12px 'Liberation Serif', serif;line-height:1;color:#fff;white-space:pre;letter-spacing:0.300px">100 km</div><div style="left:624.00px;top:769.70px;font:normal normal 12px 'Liberation Serif', serif;line-height:1;color:#fff;white-space:pre;letter-spacing:-0.012px">Plot width: 189 km</div><div style="left:206.30px;top:377.80px;font:normal normal 12.5px 'Liberation Serif', serif;line-height:1;color:#fff;white-space:pre">1</div><div style="left:196.90px;top:396.20px;font:normal normal 12.5px 'Liberation Serif', serif;line-height:1;color:#fff;white-space:pre">2</div><div style="left:189.50px;top:423.00px;font:normal normal 12.5px 'Liberation Serif', serif;line-height:1;color:#fff;white-space:pre">3</div><div style="left:560.50px;top:553.50px;font:normal normal 12.5px 'Liberation Serif', serif;line-height:1;color:#fff;white-space:pre">1</div><div style="left:556.50px;top:573.50px;font:normal normal 12.5px 'Liberation Serif', serif;line-height:1;color:#fff;white-space:pre">2</div><div style="left:534.00px;top:594.00px;font:normal normal 12.5px 'Liberation Serif', serif;line-height:1;color:#fff;white-space:pre">3</div><div style="left:408.00px;top:447.00px;font:normal normal 12.5px 'Liberation Serif', serif;line-height:1;color:#fff;white-space:pre">4</div><div style="left:763.36px;top:59.80px;font:normal normal 11px 'Liberation Sans', sans-serif;line-height:1;color:#000;white-space:pre;transform:scaleX(0.9446);transform-origin:0 0">Find best fit</div><div style="left:815.77px;top:74.80px;font:normal normal 11.5px 'Liberation Sans', sans-serif;line-height:1;color:#000;white-space:pre;transform:scaleX(0.9273);transform-origin:0 0">Center X</div><div style="left:815.78px;top:96.70px;font:normal normal 11.5px 'Liberation Sans', sans-serif;line-height:1;color:#000;white-space:pre;transform:scaleX(0.9159);transform-origin:0 0">Center Y</div><div style="left:864.70px;top:72.70px;font:normal normal 11.5px 'Liberation Sans', sans-serif;line-height:1;color:#000;white-space:pre">9.8</div><div style="left:864.70px;top:94.70px;font:normal normal 11.5px 'Liberation Sans', sans-serif;line-height:1;color:#000;white-space:pre">20.5</div><div style="left:952.90px;top:73.90px;font:normal normal 11.5px 'Liberation Sans', sans-serif;line-height:1;color:#000;white-space:pre;transform:scaleX(0.9313);transform-origin:0 0">0.0</div><div style="left:952.90px;top:95.90px;font:normal normal 11.5px 'Liberation Sans', sans-serif;line-height:1;color:#000;white-space:pre;transform:scaleX(0.9313);transform-origin:0 0">0.0</div><div style="left:994.06px;top:74.90px;font:normal normal 11.5px 'Liberation Sans', sans-serif;line-height:1;color:#000;white-space:pre;transform:scaleX(0.9432);transform-origin:0 0">Mass X</div><div style="left:994.06px;top:96.70px;font:normal normal 11.5px 'Liberation Sans', sans-serif;line-height:1;color:#000;white-space:pre;transform:scaleX(0.9432);transform-origin:0 0">Mass Y</div><div style="left:1038.30px;top:73.00px;font:normal normal 11.5px 'Liberation Sans', sans-serif;line-height:1;color:#000;white-space:pre;transform:scaleX(0.9313);transform-origin:0 0">0.0</div><div style="left:1038.30px;top:95.00px;font:normal normal 11.5px 'Liberation Sans', sans-serif;line-height:1;color:#000;white-space:pre;transform:scaleX(0.9313);transform-origin:0 0">0.0</div><div style="left:787.09px;top:124.00px;font:normal normal 11.5px 'Liberation Sans', sans-serif;line-height:1;color:#000;white-space:pre;transform:scaleX(0.9117);transform-origin:0 0">Major axis (km)</div><div style="left:787.09px;top:145.70px;font:normal normal 11.5px 'Liberation Sans', sans-serif;line-height:1;color:#000;white-space:pre;transform:scaleX(0.9117);transform-origin:0 0">Minor axis (km)</div><div style="left:806.70px;top:166.60px;font:normal normal 11.5px 'Liberation Sans', sans-serif;line-height:1;color:#000;white-space:pre;transform:scaleX(0.9161);transform-origin:0 0">Orientation</div><div style="left:865.83px;top:121.70px;font:normal normal 11.5px 'Liberation Sans', sans-serif;line-height:1;color:#a0a0a0;white-space:pre;transform:scaleX(0.9667);transform-origin:0 0">113.7</div><div style="left:865.83px;top:143.50px;font:normal normal 11.5px 'Liberation Sans', sans-serif;line-height:1;color:#a0a0a0;white-space:pre;transform:scaleX(0.9667);transform-origin:0 0">113.7</div><div style="left:866.80px;top:165.60px;font:normal normal 11.5px 'Liberation Sans', sans-serif;line-height:1;color:#a0a0a0;white-space:pre;transform:scaleX(0.8500);transform-origin:0 0">0.0</div><div style="left:952.90px;top:122.60px;font:normal normal 11.5px 'Liberation Sans', sans-serif;line-height:1;color:#a9a9a9;white-space:pre;transform:scaleX(0.9313);transform-origin:0 0">0.0</div><div style="left:952.90px;top:144.50px;font:normal normal 11.5px 'Liberation Sans', sans-serif;line-height:1;color:#a9a9a9;white-space:pre;transform:scaleX(0.9313);transform-origin:0 0">0.0</div><div style="left:952.90px;top:166.40px;font:normal normal 11.5px 'Liberation Sans', sans-serif;line-height:1;color:#a9a9a9;white-space:pre;transform:scaleX(0.9313);transform-origin:0 0">0.0</div><div style="left:1004.07px;top:118.80px;font:normal normal 11.5px 'Liberation Sans', sans-serif;line-height:1;color:#a0a0a0;white-space:pre;transform:scaleX(0.9288);transform-origin:0 0">Shape model</div><div style="left:990.70px;top:145.50px;font:normal normal 11.5px 'Liberation Sans', sans-serif;line-height:1;color:#000;white-space:pre;transform:scaleX(0.9491);transform-origin:0 0">a/b: 1.00, dMag: 0.00</div><div style="left:994.06px;top:171.00px;font:normal normal 11.5px 'Liberation Sans', sans-serif;line-height:1;color:#000;white-space:pre;transform:scaleX(0.9389);transform-origin:0 0">Motion: 11.76 km/s</div><div style="left:785.68px;top:193.70px;font:normal normal 11.5px 'Liberation Sans', sans-serif;line-height:1;color:#000;white-space:pre;transform:scaleX(0.9237);transform-origin:0 0">Circular</div><div style="left:856.20px;top:187.00px;font:normal normal 11.5px 'Liberation Sans', sans-serif;line-height:1;color:#000;white-space:pre;transform:scaleX(0.9014);transform-origin:0 0">Use assumed</div><div style="left:857.10px;top:199.90px;font:normal normal 11.5px 'Liberation Sans', sans-serif;line-height:1;color:#000;white-space:pre;transform:scaleX(0.8800);transform-origin:0 0">diameter</div><div style="left:954.27px;top:193.70px;font:normal normal 11.5px 'Liberation Sans', sans-serif;line-height:1;color:#000;white-space:pre;transform:scaleX(0.9320);transform-origin:0 0">Include Miss events</div><div style="left:773.98px;top:223.40px;font:normal bold 11.5px 'Liberation Sans', sans-serif;line-height:1;color:#a3a3a3;white-space:pre;transform:scaleX(1.0185);transform-origin:0 0">Double stars - show</div><div style="left:917.02px;top:225.90px;font:normal normal 10px 'Liberation Sans', sans-serif;line-height:1;color:#a3a3a3;white-space:pre;transform:scaleX(0.9842);transform-origin:0 0">Both</div><div style="left:969.07px;top:225.90px;font:normal normal 10px 'Liberation Sans', sans-serif;line-height:1;color:#a3a3a3;white-space:pre;transform:scaleX(0.9294);transform-origin:0 0">Primary</div><div style="left:1033.97px;top:225.90px;font:normal normal 10px 'Liberation Sans', sans-serif;line-height:1;color:#a3a3a3;white-space:pre;transform:scaleX(0.9277);transform-origin:0 0">Secondary</div><div style="left:766.70px;top:249.60px;font:normal bold 12px 'Liberation Sans', sans-serif;line-height:1;color:#0a6a14;white-space:pre;transform:scaleX(0.9923);transform-origin:0 0">Quality of the fit</div><div style="left:870.30px;top:250.30px;font:normal normal 11.5px 'Liberation Sans', sans-serif;line-height:1;color:#000;white-space:pre;transform:scaleX(0.8939);transform-origin:0 0">Astrometry only. No reliable size</div><div style="left:887.00px;top:271.80px;font:italic normal 11.5px 'Liberation Sans', sans-serif;line-height:1;color:#000;white-space:pre;transform:scaleX(0.9046);transform-origin:0 0">Flag for future review</div><div style="left:764.50px;top:305.70px;font:normal bold 12px 'Liberation Sans', sans-serif;line-height:1;color:#5e0a44;white-space:pre">P</div><div style="left:765.00px;top:318.30px;font:normal bold 12px 'Liberation Sans', sans-serif;line-height:1;color:#5e0a44;white-space:pre">L</div><div style="left:764.50px;top:332.70px;font:normal bold 12px 'Liberation Sans', sans-serif;line-height:1;color:#5e0a44;white-space:pre">O</div><div style="left:765.50px;top:345.00px;font:normal bold 12px 'Liberation Sans', sans-serif;line-height:1;color:#5e0a44;white-space:pre">T</div><div style="left:784.67px;top:301.70px;font:normal bold 12px 'Liberation Sans', sans-serif;line-height:1;color:#5e0a44;white-space:pre;transform:scaleX(1.0300);transform-origin:0 0">Scale</div><div style="left:784.69px;top:328.00px;font:normal bold 12px 'Liberation Sans', sans-serif;line-height:1;color:#5e0a44;white-space:pre;transform:scaleX(1.0130);transform-origin:0 0">Size</div><div style="left:842.74px;top:328.60px;font:normal bold 12px 'Liberation Sans', sans-serif;line-height:1;color:#5e0a44;white-space:pre;transform:scaleX(0.9632);transform-origin:0 0">normal</div><div style="left:907.80px;top:328.80px;font:normal bold 12px 'Liberation Sans', sans-serif;line-height:1;color:#5e0a44;white-space:pre;transform:scaleX(1.1000);transform-origin:0 0">x 2</div><div style="left:951.40px;top:328.80px;font:normal bold 12px 'Liberation Sans', sans-serif;line-height:1;color:#5e0a44;white-space:pre;transform:scaleX(1.0588);transform-origin:0 0">x 5</div><div style="left:785.70px;top:353.70px;font:normal bold 12px 'Liberation Sans', sans-serif;line-height:1;color:#780a18;white-space:pre">Scroll range x1.25</div><div style="left:999.34px;top:328.80px;font:normal bold 12px 'Liberation Sans', sans-serif;line-height:1;color:#800080;white-space:pre;transform:scaleX(0.9581);transform-origin:0 0">Form opacity</div><div style="left:770.11px;top:382.70px;font:normal normal 12px 'Liberation Sans', sans-serif;line-height:1;color:#000;white-space:pre;transform:scaleX(0.8917);transform-origin:0 0">RMS fit -0.3 ±1.6 km</div><div style="left:858.70px;top:405.60px;font:normal normal 13.67px 'Liberation Mono', monospace;line-height:1;color:#000;white-space:pre">1</div><div style="left:899.30px;top:405.60px;font:normal normal 13.67px 'Liberation Mono', monospace;line-height:1;color:#000;white-space:pre;width:189.70px;overflow:hidden">P Nosworthy, near Hazel</div><div style="left:858.70px;top:417.60px;font:normal normal 13.67px 'Liberation Mono', monospace;line-height:1;color:#000;white-space:pre">2</div><div style="left:899.30px;top:417.60px;font:normal normal 13.67px 'Liberation Mono', monospace;line-height:1;color:#000;white-space:pre;width:189.70px;overflow:hidden">D Gault, near Hawkesbur</div><div style="left:858.70px;top:429.60px;font:normal normal 13.67px 'Liberation Mono', monospace;line-height:1;color:#000;white-space:pre">3</div><div style="left:900.30px;top:429.60px;font:normal normal 13.67px 'Liberation Mono', monospace;line-height:1;color:#000;white-space:pre;width:188.70px;overflow:hidden">W Hanna, near Yass, Nsw</div><div style="left:858.70px;top:441.60px;font:normal normal 13.67px 'Liberation Mono', monospace;line-height:1;color:#000;white-space:pre">4(P)</div><div style="left:899.30px;top:441.60px;font:normal normal 13.67px 'Liberation Mono', monospace;line-height:1;color:#000;white-space:pre;width:189.70px;overflow:hidden">Predicted</div></body></html>
